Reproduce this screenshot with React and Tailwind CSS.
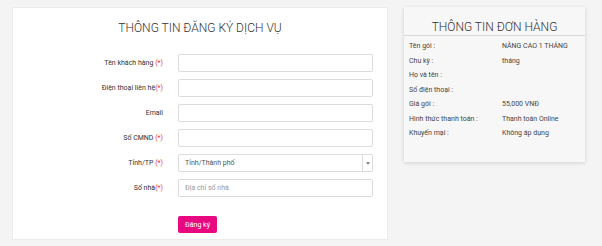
import React from "react";

const Req = () => <span className="text-[#e53935]">(*)</span>;

function Row({ label, children }) {
  return (
    <div className="flex items-center h-[18px]">
      <div className="w-[150px] text-right text-[7px] leading-[10px] text-[#333]">{label}</div>
      <div className="ml-[15px] w-[195px] h-[18px] flex">{children}</div>
    </div>
  );
}

const inputCls =
  "block w-full h-[18px] border border-[#dcdcdc] rounded-[2px] bg-white px-[6px] text-[7px] leading-[10px] outline-none placeholder:text-[#999]";

export default function App() {
  const info = [
    ["Tên gói :", "NÂNG CAO 1 THÁNG"],
    ["Chu kỳ :", "tháng"],
    ["Họ và tên :", ""],
    ["Số điện thoại :", ""],
    ["Giá gói :", "55,000 VNĐ"],
    ["Hình thức thanh toán :", "Thanh toán Online"],
    ["Khuyến mại :", "Không áp dụng"],
  ];
  return (
    <div
      className="w-[602px] h-[246px] bg-[#f4f4f4] flex items-start pl-[12px] pt-[7px] gap-[16px]"
      style={{ fontFamily: "Roboto, 'Noto Sans', sans-serif" }}
    >
      <div className="w-[376px] h-[233px] bg-white border border-[#ececec] flex flex-col">
        <div className="pt-[13px] text-center text-[12px] leading-[15px] font-light text-[#333]">
          THÔNG TIN ĐĂNG KÝ DỊCH VỤ
        </div>
        <div className="mt-[18px] flex flex-col gap-[7px]">
          <Row label={<>Tên khách hàng <Req /></>}>
            <input className={inputCls} />
          </Row>
          <Row label={<>Điện thoại liên hệ<Req /></>}>
            <input className={inputCls} />
          </Row>
          <Row label="Email">
            <input className={inputCls} />
          </Row>
          <Row label={<>Số CMND <Req /></>}>
            <input className={inputCls} />
          </Row>
          <Row label={<>Tỉnh/TP <Req /></>}>
            <div className="w-full h-full border border-[#dcdcdc] rounded-[2px] bg-white flex items-center">
              <span className="flex-1 px-[6px] text-[7px] leading-[10px] text-[#555]">Tỉnh/Thành phố</span>
              <div className="w-[10px] h-full border-l border-[#dcdcdc] flex items-center justify-center">
                <div className="w-0 h-0 border-l-[2px] border-r-[2px] border-t-[3px] border-l-transparent border-r-transparent border-t-[#888]" />
              </div>
            </div>
          </Row>
          <Row label={<>Số nhà<Req /></>}>
            <input className={inputCls} placeholder="Địa chỉ số nhà" />
          </Row>
        </div>
        <div className="mt-[19px] ml-[165px] flex">
          <button className="block w-[39px] h-[17px] bg-[#e8087f] rounded-[2px] text-white text-[7px] leading-[10px]">
            Đăng ký
          </button>
        </div>
      </div>
      <div className="w-[181px] h-[155px] bg-[#f7f7f7] shadow-[0_1px_4px_rgba(0,0,0,0.15)] flex flex-col">
        <div className="pt-[13px] pb-0 text-center text-[12px] leading-[15px] font-light text-[#333] border-b border-[#d8d8d8]">
          THÔNG TIN ĐƠN HÀNG
        </div>
        <div className="pt-[3px] flex flex-col">
          {info.map(([k, v]) => (
            <div key={k} className="flex h-[14.5px] items-center text-[7px] text-[#444]">
              <div className="w-[98px] pl-[5px]">{k}</div>
              <div>{v}</div>
            </div>
          ))}
        </div>
      </div>
    </div>
  );
}
